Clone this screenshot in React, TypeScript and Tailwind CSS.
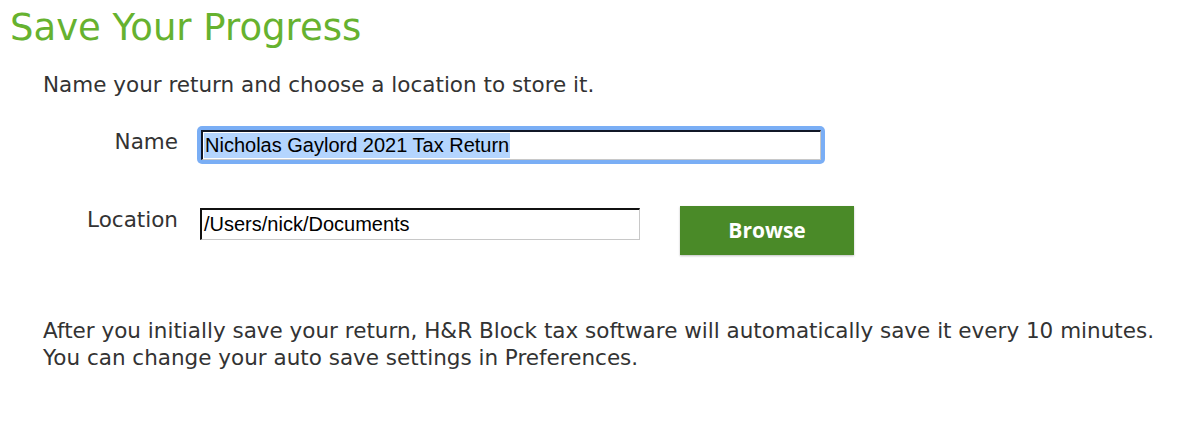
import React from "react";

export default function App() {
  return (
    <div
      className="w-[1200px] h-[440px] bg-white text-[#333333] overflow-hidden"
      style={{ fontFamily: '"DejaVu Sans", Verdana, sans-serif' }}
    >
      <h1 className="pl-[10px] pt-[8px] text-[37px] leading-[40px] text-[#66b22f] font-normal">
        Save Your Progress
      </h1>
      <p className="ml-[43px] mt-[23px] text-[21.5px] leading-[28px]">
        Name your return and choose a location to store it.
      </p>

      <div className="mt-[27px] flex items-center">
        <div className="w-[178px] mb-[6px] text-right text-[21.5px] leading-[28px]">Name</div>
        <div className="ml-[19px] w-[628px] h-[38px] rounded-[5px] bg-[#7aaef5] p-[4px]">
          <div
            className="w-full h-full bg-white border-t-2 border-l-2 border-t-[#111827] border-l-[#111827] border-b border-r border-b-[#c8c8c8] border-r-[#c8c8c8] flex items-center px-[1px]"
            style={{ fontFamily: '"Liberation Sans", Arial, sans-serif' }}
          >
            <span className="bg-[#b4d5fe] text-black text-[20px] leading-[25px] px-[1px]">
              Nicholas Gaylord 2021 Tax Return
            </span>
          </div>
        </div>
      </div>

      <div className="mt-[42px] flex items-start">
        <div className="w-[178px] text-right text-[21.5px] leading-[28px]">Location</div>
        <div
          className="mt-[2px] ml-[22px] w-[440px] h-[32px] bg-white border-t-2 border-l-2 border-t-[#111111] border-l-[#111111] border-b border-r border-b-[#c8c8c8] border-r-[#c8c8c8] flex items-center px-[2px]"
          style={{ fontFamily: '"Liberation Sans", Arial, sans-serif' }}
        >
          <span className="text-black text-[20px] leading-[25px]">/Users/nick/Documents</span>
        </div>
        <button
          className="ml-[40px] w-[174px] h-[49px] bg-[#4a8a28] text-white text-[21px] font-bold shadow-[0_1px_2px_rgba(0,0,0,0.25)]"
          style={{ fontFamily: '"Open Sans", sans-serif' }}
        >
          Browse
        </button>
      </div>

      <p className="ml-[43px] mt-[62px] text-[21.5px] leading-[27px]">
        After you initially save your return, H&amp;R Block tax software will automatically save it every 10 minutes.
        <br />
        You can change your auto save settings in Preferences.
      </p>
    </div>
  );
}
